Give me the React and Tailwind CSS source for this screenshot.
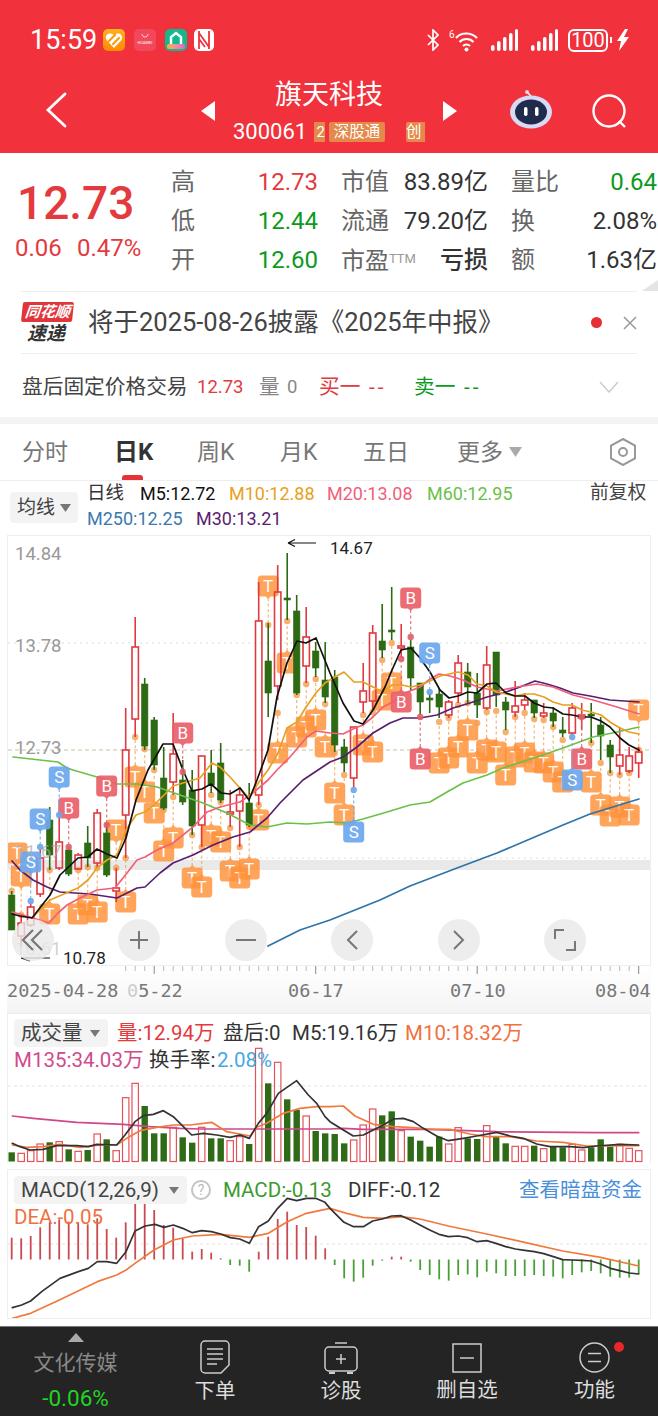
import React from "react";

const X = (i) => 11.7 + 9.5 * i;

// type, bodyTop, bodyBottom, wickTop, wickBottom (page y)
const candles = [
  ["g", 895, 930, 891, 930], ["r", 923, 936, 915, 947], ["r", 907, 925, 903, 927], ["r", 858, 894, 850, 897],
  ["g", 820, 855, 807, 870], ["r", 842, 868, 813, 870], ["g", 850, 874, 847, 876], ["r", 855, 869, 853, 870],
  ["g", 843, 858, 826, 867], ["r", 813, 863, 809, 868], ["g", 833, 875, 823, 877], ["r", 888, 891, 868, 902],
  ["r", 750, 815, 708, 858], ["r", 647, 719, 617, 737], ["g", 684, 746, 678, 750], ["g", 720, 765, 717, 770],
  ["g", 778, 808, 747, 810], ["r", 754, 782, 713, 795], ["g", 780, 802, 760, 805], ["g", 790, 826, 770, 835],
  ["r", 756, 825, 756, 847], ["g", 773, 785, 750, 793], ["g", 763, 800, 743, 803], ["r", 812, 814, 790, 827],
  ["r", 795, 811, 787, 847], ["g", 803, 825, 783, 827], ["r", 621, 795, 582, 805], ["g", 661, 693, 623, 717],
  ["r", 592, 686, 565, 700], ["g", 598, 600, 553, 620], ["g", 611, 693, 595, 695], ["r", 637, 666, 607, 683],
  ["g", 651, 668, 642, 677], ["g", 680, 697, 642, 703], ["g", 677, 745, 670, 752], ["g", 747, 763, 739, 772],
  ["r", 727, 778, 727, 787], ["r", 691, 702, 663, 713], ["r", 633, 701, 625, 710], ["g", 641, 650, 604, 658],
  ["g", 630, 632, 587, 640], ["r", 646, 648, 624, 658], ["g", 647, 678, 640, 690], ["g", 683, 702, 683, 715],
  ["g", 698, 700, 693, 713], ["g", 694, 707, 688, 718], ["r", 702, 715, 700, 718], ["r", 663, 693, 655, 703],
  ["g", 672, 687, 663, 703], ["g", 693, 705, 673, 718], ["r", 665, 708, 646, 710], ["g", 652, 695, 652, 707],
  ["g", 702, 710, 697, 730], ["r", 706, 712, 681, 717], ["r", 700, 705, 693, 710], ["g", 700, 713, 700, 718],
  ["r", 713, 716, 703, 718], ["g", 713, 721, 707, 727], ["g", 730, 733, 717, 737], ["r", 708, 733, 703, 735],
  ["r", 715, 718, 703, 730], ["g", 714, 716, 703, 743], ["g", 725, 736, 717, 760], ["g", 745, 757, 740, 773],
  ["r", 755, 766, 727, 775], ["r", 756, 771, 747, 773], ["r", 752, 763, 747, 778],
];

// i, badge centre y, dot y, optional badge x
const tMarks = [
  [0, 853, 891, 17], [1, 876, 915], [4, 914, 870], [7, 914, 870], [8, 905, 867], [9, 912, 868], [12, 902, 858], [11, 830, 868],
  [13, 777, 737], [14, 792, 749], [15, 813, 770], [16, 851, 810], [17, 838, 797], [19, 878, 835], [20, 887, 847], [21, 836, 795],
  [22, 842, 802], [23, 871, 828], [24, 878, 847], [25, 869, 827], [26, 820, 805], [27, 586, 625], [28, 753, 713], [29, 663, 621],
  [30, 737, 695], [31, 727, 684], [32, 720, 679], [33, 747, 704], [34, 793, 753], [35, 815, 775], [37, 745, 715], [38, 752, 712],
  [39, 700, 660], [40, 683, 643], [45, 763, 722], [46, 758, 718], [47, 747, 705], [48, 730, 703], [49, 763, 723], [50, 750, 712],
  [51, 752, 711], [52, 775, 732], [53, 757, 717], [54, 753, 713], [55, 762, 719], [56, 763, 720], [57, 772, 727], [58, 782, 740],
  [61, 782, 743], [62, 805, 763], [63, 816, 773], [64, 807, 775], [65, 815, 773], [66, 710, 750],
];
const bMarks = [[10, 786, 825], [6, 808, 847], [18, 733, 772], [42, 598, 637], [41, 702, 659], [43, 759, 717], [60, 759, 717]];
const sMarks = [[5, 777, 815], [3, 819, 847], [2, 862, 901], [44, 653, 692], [36, 832, 790], [59, 780, 737]];

const m5 = [[12,914],[20,916],[32,918],[50,895],[60,875],[78,858],[88,857],[97,849],[107,854],[117,858],[126,838],[136,800],[148,770],[163,744],[173,744],[183,770],[192,791],[202,789],[211,784],[221,793],[230,794],[240,788],[249,800],[257,780],[268,750],[277,697],[287,663],[297,641],[306,643],[316,638],[330,673],[343,703],[354,721],[363,724],[373,710],[385,687],[392,670],[401,650],[411,648],[420,658],[430,672],[440,690],[449,698],[458,696],[468,692],[477,693],[487,684],[496,683],[506,693],[515,696],[525,696],[534,703],[544,707],[553,708],[563,714],[572,715],[582,717],[591,717],[601,721],[610,727],[620,738],[629,745],[639,750]];
const m10 = [[32,918],[50,900],[78,888],[88,880],[97,868],[107,860],[117,855],[126,830],[136,815],[145,812],[154,805],[164,795],[173,786],[183,783],[200,778],[212,763],[220,767],[230,777],[249,798],[259,782],[268,770],[278,753],[287,728],[297,722],[306,707],[316,693],[325,683],[335,677],[344,672],[354,682],[363,682],[373,687],[383,692],[392,685],[402,685],[411,687],[420,685],[430,681],[440,676],[449,674],[458,672],[468,675],[477,684],[487,686],[496,692],[506,694],[515,696],[525,694],[534,694],[544,697],[553,702],[563,705],[572,705],[582,710],[591,712],[601,715],[610,722],[620,728],[629,732],[639,734]];
const m20 = [[12,912],[30,917],[49,923],[58,913],[67,905],[80,898],[97,890],[115,888],[127,873],[137,860],[145,857],[157,850],[173,843],[193,827],[207,812],[220,807],[240,802],[253,793],[268,780],[277,770],[290,757],[307,737],[316,731],[330,733],[343,734],[353,729],[363,725],[373,717],[383,707],[393,702],[405,693],[420,687],[430,679],[439,674],[450,676],[463,680],[477,687],[497,691],[517,687],[537,684],[553,687],[573,695],[593,700],[617,707],[639,714]];
const m30 = [[12,861],[20,870],[33,880],[47,887],[60,892],[90,894],[117,898],[137,888],[145,887],[160,873],[173,863],[193,855],[213,845],[233,837],[250,832],[267,818],[280,803],[303,780],[330,762],[343,757],[357,747],[373,733],[390,723],[403,718],[420,718],[437,715],[453,708],[470,703],[487,697],[503,693],[520,687],[535,681],[547,684],[560,688],[573,693],[590,696],[610,700],[639,702]];
const m60 = [[13,757],[58,762],[67,768],[73,770],[97,777],[117,784],[137,784],[157,787],[180,795],[203,803],[227,813],[250,825],[267,827],[287,823],[307,824],[330,822],[347,823],[363,819],[387,812],[410,805],[430,802],[447,792],[463,783],[487,775],[503,768],[537,757],[563,748],[593,737],[617,732],[639,727]];
const m250 = [[268,946],[300,930],[330,920],[380,900],[410,886],[457,868],[497,853],[530,839],[563,825],[590,814],[639,799]];

// volume bar tops, measured on a 3x crop of the panel
const volTops = [427,430,422,402,397,395,418,424,420,372,388,422,263,220,288,370,370,352,382,398,352,385,385,392,380,402,115,220,157,268,300,318,363,370,372,400,390,345,297,316,304,362,380,392,410,380,402,353,385,387,347,378,400,409,409,407,416,410,412,403,420,412,388,410,403,415,422];
const macdEnds = [218,220,213,187,172,163,170,172,178,160,192,218,172,100,112,135,180,188,220,260,252,263,280,300,302,320,260,215,162,140,180,186,212,250,300,340,350,338,302,287,275,275,290,315,330,343,347,330,328,337,320,325,333,333,333,330,333,335,340,330,322,318,325,335,338,338,327];

// left half points and right half points of the two lower panels
const join = (base, a, b) => [...a.map(([x, y]) => [x / 3, base + y / 3]), ...b.map(([x, y]) => [330 + x / 3, base + y / 3])];
const volBlack = join(1010, [[37,400],[60,410],[90,420],[130,418],[170,407],[230,407],[265,410],[290,403],[350,405],[375,375],[405,335],[430,317],[460,313],[490,302],[520,320],[550,350],[575,375],[610,370],[650,375],[690,382],[720,375],[748,385],[775,340],[800,310],[835,250],[890,212],[925,255],[950,280],[975,320]], [[0,335],[40,360],[70,378],[100,375],[130,360],[160,345],[190,327],[220,325],[250,335],[280,355],[320,378],[355,392],[400,385],[440,378],[500,367],[540,378],[580,385],[620,402],[660,410],[720,410],[760,413],[800,408],[870,403],[926,405]]);
const volOrange = join(1010, [[37,405],[80,412],[130,410],[180,403],[240,412],[300,405],[350,405],[380,385],[420,362],[470,352],[520,345],[570,345],[635,337],[680,365],[750,378],[770,352],[800,340],[850,310],[900,295],[950,290]], [[0,290],[40,288],[75,318],[130,343],[190,350],[250,353],[300,358],[360,358],[420,372],[470,380],[540,380],[620,393],[700,397],[770,408],[926,407]]);
const volPink = join(1010, [[37,318],[100,325],[230,337],[370,343],[450,350],[540,355],[600,357]], [[0,357],[40,355],[100,358],[300,358],[500,365],[800,368],[926,368]]);
const diff = join(1165, [[37,428],[65,420],[92,408],[125,380],[180,340],[235,320],[265,310],[292,290],[320,290],[350,295],[378,260],[405,198],[435,183],[465,178],[492,187],[520,180],[548,190],[577,203],[605,197],[634,200],[662,207],[691,218],[719,222],[748,235],[776,185],[805,168],[833,130],[862,100],[890,107],[919,100],[947,100],[975,112]], [[0,130],[42,172],[71,185],[100,185],[128,168],[156,162],[185,153],[213,152],[242,165],[270,180],[299,195],[327,208],[355,215],[385,213],[413,218],[441,230],[470,227],[498,235],[527,245],[556,252],[584,256],[613,260],[641,266],[670,275],[698,284],[726,285],[755,286],[784,288],[812,297],[841,310],[869,317],[898,324],[926,327]]);
const dea = join(1165, [[37,460],[92,445],[178,405],[292,350],[350,330],[378,315],[405,295],[462,255],[520,225],[577,213],[662,208],[748,217],[805,205],[862,170],[919,145]], [[0,130],[50,145],[100,157],[160,160],[213,155],[270,162],[355,183],[470,207],[584,232],[698,258],[812,277],[926,303]]);

const Line = ({ pts, color, w = 1.7 }) => (
  <polyline points={pts.map((p) => p.join(",")).join(" ")} fill="none" stroke={color} strokeWidth={w} strokeLinejoin="round" strokeLinecap="round" />
);

const Candle = ({ c, i }) => {
  const x = X(i);
  const col = c[0] === "r" ? "#e0393f" : "#2d6a14";
  return (
    <g stroke={col} strokeWidth="1.6">
      <line x1={x} x2={x} y1={c[3]} y2={c[1]} />
      <line x1={x} x2={x} y1={c[2]} y2={c[4]} />
      {c[0] === "r" ? (
        <rect x={x - 3.2} y={c[1]} width="6.4" height={c[2] - c[1]} fill="none" />
      ) : (
        <rect x={x - 3.2} y={c[1]} width="6.4" height={c[2] - c[1]} fill={col} strokeWidth="0.6" />
      )}
    </g>
  );
};

const Badge = ({ m, label, fill, dot, opacity }) => {
  const [i, y, dy, bx] = m;
  const x = X(i);
  const cx = bx ?? Math.min(x, 639);
  const dir = dy > y ? 1 : -1;
  return (
    <g opacity={opacity}>
      <line x1={x} x2={x} y1={y + dir * 12} y2={dy} stroke={dot} strokeWidth="1.1" strokeDasharray="3 2.5" />
      <circle cx={x} cy={dy} r="3.2" fill={dot} />
      <rect x={cx - 10.5} y={y - 10.5} width="21" height="21" rx="3.5" fill={fill} />
      <polygon points={`${cx - 3},${y + dir * 10} ${cx + 3},${y + dir * 10} ${cx},${y + dir * 13}`} fill={fill} />
      <text x={cx} y={y + 6} textAnchor="middle" fontSize="17" fill="#fff">{label}</text>
    </g>
  );
};

const StatusIcons = () => (
  <div className="flex items-center">
    <svg width="12" height="22" viewBox="0 0 12 22" fill="none" stroke="#fff" strokeWidth="1.7" className="mr-[10px]">
      <path d="M1 6l10 10-5 5V1l5 5L1 16" />
    </svg>
    <svg width="31" height="23" viewBox="0 0 31 23" fill="none" stroke="#fff" strokeWidth="2.2" className="mr-[11px]">
      <text x="0" y="9" fontSize="10" fill="#fff" stroke="none">6</text>
      <path d="M7 9c5-6 15-6 21 0M10.5 13c3.5-4 10.500-4 14 0M14 17c2-2 5-2 7 0" />
      <circle cx="17.500" cy="20.500" r="2" fill="#fff" stroke="none" />
    </svg>
    {[0, 1].map((k) => (
      <svg key={k} width="27" height="22" viewBox="0 0 27 22" fill="#fff" className={k === 0 ? "mr-[13px]" : "mr-[10px]"}>
        <rect x="0" y="16" width="3.500" height="6" rx="1.700" />
        <rect x="6" y="12" width="3.500" height="10" rx="1.700" />
        <rect x="12" y="8" width="3.500" height="14" rx="1.700" />
        <rect x="18" y="4" width="3.500" height="18" rx="1.700" />
        <rect x="24" y="0" width="3" height="22" rx="1.500" />
      </svg>
    ))}
    <div className="flex h-[23px] w-[40px] items-center justify-center rounded-[6px] border-2 border-white text-[20px] leading-none text-white">100</div>
    <div className="ml-[2px] mr-[5px] h-[6px] w-[2px] bg-white" />
    <svg width="12" height="22" viewBox="0 0 12 22" fill="#fff">
      <path d="M8 0L0 12h4l-2 10 10-14H7l4-8z" />
    </svg>
  </div>
);

const Header = () => (
  <header className="h-[153px] bg-[#f1323d] text-white">
    <div className="flex h-[80px] items-center pl-[30px] pr-[29px]">
      <span className="w-[73px] text-[27px] leading-none">15:59</span>
      <div className="flex h-[22px] w-[22px] items-center justify-center rounded-[5px] bg-linear-to-b from-[#ffb21d] to-[#ff8a00]">
        <svg width="18" height="17" viewBox="0 0 18 17" fill="none">
          <path d="M9 16L2 8.500C0 6 1 2 4.500 1.500 6.500 1.200 8 2 9 3.500 10 2 11.500 1.200 13.500 1.500 17 2 18 6 16 8.500z" fill="#fff" />
          <path d="M4 9l6-6M8 12l6-6" stroke="#ff9a10" strokeWidth="2.200" strokeLinecap="round" />
        </svg>
      </div>
      <div className="ml-[9px] flex h-[22px] w-[22px] flex-col items-center justify-center rounded-[5px] bg-[#f2485a]">
        <svg width="8" height="4" viewBox="0 0 8 4" fill="none" stroke="#fff" strokeWidth="0.800" className="mb-[2px]">
          <path d="M1 0c0 4 6 4 6 0" />
        </svg>
        <span className="text-[4px] leading-[6px] text-white">HUAWEI</span>
      </div>
      <div className="relative ml-[9px] flex h-[22px] w-[22px] items-start justify-center overflow-hidden rounded-[5px] bg-[#12b98c] pt-[2px]">
        <svg width="14" height="15" viewBox="0 0 14 15" fill="none" stroke="#fff" strokeWidth="2.500">
          <path d="M2 15V6l5-4 5 4v9" />
        </svg>
        <div className="absolute bottom-[2px] left-[2px] h-[5px] w-[18px] rounded-[2px] bg-linear-to-r from-[#f7b23b] to-[#e860c8]" />
      </div>
      <div className="ml-[7px] flex h-[22px] w-[20px] items-center justify-center rounded-[5px] bg-white">
        <svg width="14" height="18" viewBox="0 0 14 18" fill="none" stroke="#f1323d" strokeWidth="1.800">
          <path d="M2 0v18M12 0v18M2 2l10 14M2 8l6 8" />
        </svg>
      </div>
      <div className="ml-auto">
        <StatusIcons />
      </div>
    </div>
    <div className="flex h-[73px]">
      <svg width="22" height="36" viewBox="0 0 22 36" fill="none" stroke="#fff" strokeWidth="2.800" strokeLinecap="round" className="ml-[45px] mt-[12px]">
        <path d="M20 2L3 18l17 16" />
      </svg>
      <svg width="14" height="20" viewBox="0 0 14 20" fill="#fff" className="ml-[134px] mt-[21px]">
        <polygon points="14,0 14,20 0,10" />
      </svg>
      <div className="w-[228px] pt-[1px]">
        <div className="text-center text-[27px] leading-[29px]">旗天科技</div>
        <div className="mt-[12px] flex h-[20px] items-center pl-[18px]">
          <span className="w-[81px] text-[22px] leading-none">300061</span>
          <span className="flex h-[20px] w-[11px] justify-end overflow-hidden bg-[#e5894a] text-[15px] leading-[20px]">2</span>
          <span className="ml-[4px] h-[20px] w-[56px] rounded-[2px] bg-[#e5894a] text-center text-[15.500px] leading-[20px]">深股通</span>
          <span className="ml-[21px] h-[20px] w-[19px] overflow-hidden rounded-l-[2px] bg-[#e5894a] text-[15.500px] leading-[20px]">创</span>
        </div>
      </div>
      <svg width="14" height="20" viewBox="0 0 14 20" fill="#fff" className="mt-[21px]">
        <polygon points="0,0 0,20 14,10" />
      </svg>
      <svg width="44" height="40" viewBox="0 0 44 40" className="ml-[52px] mt-[9px]">
        <circle cx="18" cy="3" r="2" fill="#f9c4cf" />
        <path d="M18 3l4 4" stroke="#fff" strokeWidth="1.500" />
        <ellipse cx="22" cy="23" rx="21" ry="16.500" fill="#d8d9f5" />
        <ellipse cx="22" cy="23" rx="16" ry="12.500" fill="#1f2a4d" />
        <rect x="15" y="18" width="3.500" height="9" rx="1.700" fill="#fff" />
        <rect x="26" y="18" width="3.500" height="9" rx="1.700" fill="#fff" />
      </svg>
      <svg width="36" height="36" viewBox="0 0 36 36" fill="none" stroke="#fff" strokeWidth="2.400" className="ml-[39px] mt-[14px]">
        <circle cx="17" cy="17" r="15.500" />
        <path d="M27 27l6 6" />
      </svg>
    </div>
  </header>
);

const Cell = ({ label, value, valueClass = "text-[#333]" }) => (
  <div className="flex items-center justify-between">
    <span className="text-[#666]">{label}</span>
    <span className={valueClass}>{value}</span>
  </div>
);

const Stats = () => (
  <section className="relative flex h-[138px] pt-[10px] text-[24px] leading-[38.500px]">
    <div className="w-[171px] pl-[17px] text-[#e33a3e]">
      <div className="mt-[9px] text-[46px] font-medium leading-[62px]">12.73</div>
      <div className="-ml-[2px] mt-[-1px] flex text-[24px] leading-[30px]">
        <span className="w-[62px]">0.06</span>
        <span>0.47%</span>
      </div>
    </div>
    <div className="grid h-[116px] grid-cols-[147px_147px_147px] gap-x-[23px]">
      <Cell label="高" value="12.73" valueClass="text-[#e33a3e]" />
      <Cell label="市值" value="83.89亿" />
      <Cell label="量比" value="0.64" valueClass="text-[#0b9a1e] pr-[1px]" />
      <Cell label="低" value="12.44" valueClass="text-[#0b9a1e]" />
      <Cell label="流通" value="79.20亿" />
      <Cell label="换" value="2.08%" valueClass="text-[#333] pr-[1px]" />
      <Cell label="开" value="12.60" valueClass="text-[#0b9a1e]" />
      <Cell
        label={
          <>
            市盈<span className="text-[13px] align-[6px] text-[#999]">TTM</span>
          </>
        }
        value="亏损"
        valueClass="text-[#333] font-medium"
      />
      <Cell label="额" value="1.63亿" valueClass="text-[#333] pr-[1px]" />
    </div>
    <svg width="16" height="11" viewBox="0 0 16 11" className="absolute bottom-[0px] right-0" fill="#e4e4e4">
      <polygon points="16,0 16,11 0,11" />
    </svg>
  </section>
);

const Notice = () => (
  <section className="mx-[21px] flex h-[63px] items-center border-y border-[#eee]">
    <div className="ml-[1px] mt-[1px] flex w-[66px] flex-col">
      <span className="flex h-[20px] w-[51px] -skew-x-6 items-center justify-center rounded-[2px] bg-[#e0353b] text-[15px] font-bold italic leading-none text-white">同花顺</span>
      <span className="mt-[2px] pl-[5px] text-[19px] font-bold italic leading-[20px] text-[#333]">速递</span>
    </div>
    <span className="w-[503px] text-[25.500px] leading-none text-[#444]">将于2025-08-26披露《2025年中报》</span>
    <span className="h-[11px] w-[11px] rounded-full bg-[#e52e35]" />
    <svg width="14" height="14" viewBox="0 0 14 14" stroke="#999" strokeWidth="1.500" className="ml-[21px]">
      <path d="M1 1l12 12M13 1L1 13" />
    </svg>
  </section>
);

const FixedPrice = () => (
  <section className="flex h-[63px] items-center pl-[22px] pt-[3px] text-[20.700px] leading-none">
    <span className="w-[175px] text-[#444]">盘后固定价格交易</span>
    <span className="w-[62px] text-[18.500px] text-[#e33a3e]">12.73</span>
    <span className="w-[28px] text-[#888]">量</span>
    <span className="w-[32px] text-[18.500px] text-[#888]">0</span>
    <span className="w-[50px] text-[#e33a3e]">买一</span>
    <span className="w-[45px] tracking-[3px] text-[#e33a3e]">--</span>
    <span className="w-[50px] text-[#0b9a1e]">卖一</span>
    <span className="w-[135px] tracking-[3px] text-[#0b9a1e]">--</span>
    <svg width="20" height="12" viewBox="0 0 20 12" fill="none" stroke="#ccc" strokeWidth="1.500">
      <path d="M1 1l9 10 9-10" />
    </svg>
  </section>
);

const Tabs = () => (
  <nav className="flex h-[57px] items-center border-b border-[#eee] pl-[22px] text-[23px] leading-none text-[#777]">
    <span className="w-[92px]">分时</span>
    <span className="relative flex h-full w-[83px] items-center text-[24px] font-bold text-[#333]">
      日K
      <span className="absolute bottom-0 left-[8px] h-[5px] w-[21px] rounded-t-[3px] bg-[#e5333a]" />
    </span>
    <span className="w-[83px]">周K</span>
    <span className="w-[83px]">月K</span>
    <span className="w-[94px]">五日</span>
    <span className="w-[52px]">更多</span>
    <svg width="13" height="10" viewBox="0 0 13 10" fill="#aaa">
      <polygon points="0,0 13,0 6.500,10" />
    </svg>
    <svg width="30" height="28" viewBox="0 0 30 28" fill="none" stroke="#999" strokeWidth="2" className="ml-[86px]">
      <polygon points="15,1 27,7.500 27,20.500 15,27 3,20.500 3,7.500" />
      <circle cx="15" cy="14" r="4" />
    </svg>
  </nav>
);

const MaLegend = () => (
  <section className="flex h-[54px] pl-[10px] text-[18px] leading-[25px]">
    <div className="mt-[11px] flex h-[31px] w-[68px] items-center rounded-[4px] bg-[#f3f3f3] pl-[7px] text-[19px] text-[#444]">
      <span className="w-[43px]">均线</span>
      <svg width="11" height="8" viewBox="0 0 11 8" fill="#777">
        <polygon points="0,0 11,0 5.500,8" />
      </svg>
    </div>
    <div className="ml-[9px] flex-1">
      <div className="flex">
        <span className="w-[53px] text-[18.500px] text-[#333]">日线</span>
        <span className="w-[89px] text-[#111]">M5:12.72</span>
        <span className="w-[98px] text-[#e8a020]">M10:12.88</span>
        <span className="w-[100px] text-[#f0607a]">M20:13.08</span>
        <span className="w-[163px] text-[#6cc04a]">M60:12.95</span>
        <span className="text-[18.800px] text-[#444]">前复权</span>
      </div>
      <div className="flex">
        <span className="w-[109px] text-[#3a7ab0]">M250:12.25</span>
        <span className="text-[#5a1e6e]">M30:13.21</span>
      </div>
    </div>
  </section>
);

const RoundBtn = ({ children }) => (
  <div className="flex h-[42px] w-[42px] items-center justify-center rounded-full bg-[#e8e8e8]/80">{children}</div>
);

const btnIcon = { fill: "none", stroke: "#777", strokeWidth: 2 };

const PriceChart = () => (
  <div className="relative mx-[7px] h-[431px] border border-[#eee]">
    <svg width="642" height="429" viewBox="8 536 642 429" className="block">
      <line x1="8" x2="650" y1="643" y2="643" stroke="#ddd" strokeDasharray="2 4" />
      <line x1="8" x2="650" y1="750" y2="750" stroke="#cbbfa8" strokeDasharray="4 3" />
      <line x1="8" x2="650" y1="858" y2="858" stroke="#ddd" strokeDasharray="2 4" />
      <rect x="8" y="860" width="642" height="10" fill="#e9e9e9" />
      {tMarks.map((m) => (
        <Badge key={m[0]} m={m} label="T" fill="#ff9238" dot="#f5a050" opacity="0.82" />
      ))}
      {candles.map((c, i) => (
        <Candle key={i} c={c} i={i} />
      ))}
      <Line pts={m250} color="#2f74a8" />
      <Line pts={m60} color="#6cc04a" />
      <Line pts={m30} color="#5a1e6e" />
      <Line pts={m20} color="#f0607a" />
      <Line pts={m10} color="#e8a020" />
      <Line pts={m5} color="#111" />
      {bMarks.map((m) => (
        <Badge key={m[0]} m={m} label="B" fill="#ea6069" dot="#e0606a" opacity="0.92" />
      ))}
      {sMarks.map((m) => (
        <Badge key={m[0]} m={m} label="S" fill="#6ca8ee" dot="#6ca8e8" opacity="0.92" />
      ))}
      <path d="M288 543h28M288 543l7-3.500M288 543l7 3.500" stroke="#111" strokeWidth="1.200" fill="none" />
      <path d="M21 958h29M21 958l9 3" stroke="#111" strokeWidth="1.200" fill="none" />
    </svg>
    <span className="absolute left-[7px] top-[7px] text-[18.500px] leading-[23px] text-[#999]">14.84</span>
    <span className="absolute left-[7px] top-[99px] text-[18.500px] leading-[23px] text-[#999]">13.78</span>
    <span className="absolute left-[7px] top-[201px] text-[18.500px] leading-[23px] text-[#999]">12.73</span>
    <span className="absolute left-[7px] top-[305px] text-[18.500px] leading-[23px] text-[#aaa]/70">11.67</span>
    <span className="absolute left-[7px] top-[402px] text-[18.500px] leading-[23px] text-[#bbb]/70">10.61</span>
    <span className="absolute left-[322px] top-[2px] text-[17px] leading-[20px] text-[#222]">14.67</span>
    <span className="absolute left-[55px] top-[412px] text-[17px] leading-[20px] text-[#222]">10.78</span>
    <div className="absolute left-[4px] top-[383px] flex gap-[64.400px]">
      <RoundBtn>
        <svg width="24" height="24" viewBox="0 0 24 24" {...btnIcon} strokeWidth="2.200">
          <path d="M12 2L2 12l10 10M21 2L11 12l10 10" />
        </svg>
      </RoundBtn>
      <RoundBtn>
        <svg width="20" height="20" viewBox="0 0 20 20" {...btnIcon}>
          <path d="M10 1v18M1 10h18" />
        </svg>
      </RoundBtn>
      <RoundBtn>
        <svg width="20" height="4" viewBox="0 0 20 4" {...btnIcon}>
          <path d="M0 2h20" />
        </svg>
      </RoundBtn>
      <RoundBtn>
        <svg width="12" height="20" viewBox="0 0 12 20" {...btnIcon}>
          <path d="M11 1L2 10l9 9" />
        </svg>
      </RoundBtn>
      <RoundBtn>
        <svg width="12" height="20" viewBox="0 0 12 20" {...btnIcon}>
          <path d="M1 1l9 9-9 9" />
        </svg>
      </RoundBtn>
      <RoundBtn>
        <svg width="22" height="22" viewBox="0 0 22 22" {...btnIcon}>
          <path d="M10 1H1v9M12 21h9v-9" />
        </svg>
      </RoundBtn>
    </div>
  </div>
);

const DateAxis = () => (
  <section className="mx-[7px] h-[47px] bg-linear-to-b from-white to-[#f4f4f4]">
    <svg width="644" height="9" viewBox="7 966 644 9" className="block">
      {candles.map((_, i) =>
        i >= 12 ? <line key={i} x1={X(i)} x2={X(i)} y1="966" y2={(i - 15) % 17 === 0 ? 974 : 971} stroke={(i - 15) % 17 === 0 ? "#888" : "#bbb"} strokeWidth="1" /> : null
      )}
    </svg>
    <div className="mt-[5px] flex font-['DejaVu_Sans_Mono',monospace] text-[18.500px] leading-[22px] text-[#777]">
      <span className="w-[120px]">2025-04-28</span>
      <span className="w-[161px]"><span className="text-[#ccc]">0</span>5-22</span>
      <span className="w-[162px]">06-17</span>
      <span className="w-[145px]">07-10</span>
      <span>08-04</span>
    </div>
  </section>
);

const Dropdown = ({ w, label }) => (
  <div className={`flex h-[28px] items-center justify-between rounded-[4px] bg-[#f3f3f3] pl-[7px] pr-[8px] ${w}`}>
    <span className="text-[#444]">{label}</span>
    <svg width="10" height="7" viewBox="0 0 10 7" fill="#777">
      <polygon points="0,0 10,0 5,7" />
    </svg>
  </div>
);

const VolumePanel = () => (
  <div className="relative mx-[7px] h-[150px] border-x border-t border-[#eee]">
    <svg width="642" height="149" viewBox="8 1014 642 149" className="block">
      <line x1="8" x2="650" y1="1086" y2="1086" stroke="#e4e4e4" strokeDasharray="3 3" />
      {volTops.map((t, i) => {
        const red = candles[i][0] === "r";
        const y = 1010 + t / 3;
        return (
          <rect key={i} x={X(i) - 3.2} y={y} width="6.400" height={1161.500 - y} fill={red ? "none" : "#2f6a16"} stroke={red ? "#e2545a" : "none"} strokeWidth="1.200" />
        );
      })}
      <Line pts={volPink} color="#d0488a" />
      <Line pts={volOrange} color="#f07a3e" />
      <Line pts={volBlack} color="#333" />
    </svg>
    <div className="absolute left-[6px] top-[5px] text-[20.500px] leading-[26px]">
      <div className="flex items-center">
        <Dropdown w="w-[94px]" label="成交量" />
        <span className="ml-[9px] w-[106px] text-[#e33a3e]">量:12.94万</span>
        <span className="w-[69px] text-[#333]">盘后:0</span>
        <span className="w-[113px] text-[#333]">M5:19.16万</span>
        <span className="text-[#f07040]">M10:18.32万</span>
      </div>
      <div className="flex">
        <span className="w-[135px] text-[#d04a8a]">M135:34.03万</span>
        <span className="w-[68px] text-[#333]">换手率:</span>
        <span className="text-[#4aa8e0]">2.08%</span>
      </div>
    </div>
  </div>
);

const MacdPanel = () => (
  <div className="relative mx-[7px] mt-[6px] h-[150px] border border-[#eee]">
    <svg width="642" height="148" viewBox="8 1170 642 148" className="block">
      <line x1="8" x2="650" y1="1244" y2="1244" stroke="#e4e4e4" strokeDasharray="3 3" />
      {macdEnds.map((t, i) => {
        const y = 1165 + t / 3;
        const red = y < 1259;
        return <line key={i} x1={X(i)} x2={X(i)} y1={1259.500} y2={y} stroke={red ? "#c94a50" : "#4a9e3a"} strokeWidth="1.800" />;
      })}
      <Line pts={dea} color="#f07a3e" />
      <Line pts={diff} color="#333" />
    </svg>
    <div className="absolute left-[6px] top-[6px] text-[20.500px] leading-[26px]">
      <div className="flex items-center">
        <Dropdown w="w-[173px]" label="MACD(12,26,9)" />
        <span className="ml-[4px] flex h-[20px] w-[20px] items-center justify-center rounded-full border-2 border-[#c4c4c4] text-[14px] text-[#bbb]">?</span>
        <span className="ml-[12px] w-[125px] text-[#3a9a2e]">MACD:-0.13</span>
        <span className="w-[171px] text-[#333]">DIFF:-0.12</span>
        <span className="text-[#4a90d9]">查看暗盘资金</span>
      </div>
      <div className="text-[#f07040]">DEA:-0.05</div>
    </div>
  </div>
);

const FootIcon = ({ w, label, icon, iconBox }) => (
  <div className={`flex flex-col items-center ${w}`}>
    <div className={`flex items-end ${iconBox}`}>{icon}</div>
    <span className="mt-[4px] text-[20.500px] leading-[26px] text-[#ddd]">{label}</span>
  </div>
);

const BottomBar = () => (
  <footer className="mt-[7px] flex h-[90px] border-t border-[#777] bg-[#242424]">
    <div className="flex w-[151px] flex-col items-center pt-[6px]">
      <svg width="16" height="9" viewBox="0 0 16 9" fill="#aaa">
        <polygon points="8,0 16,9 0,9" />
      </svg>
      <span className="mt-[7px] text-[21px] leading-[28px] text-[#888]">文化传媒</span>
      <span className="mt-[7px] text-[22.500px] leading-[28px] text-[#22d422]">-0.06%</span>
    </div>
    <FootIcon
      w="w-[128px]"
      iconBox="h-[47px]"
      label="下单"
      icon={
        <svg width="30" height="34" viewBox="0 0 30 34" fill="none" stroke="#ccc" strokeWidth="1.500">
          <path d="M5 1h20a4 4 0 0 1 4 4v20l-8 8H5a4 4 0 0 1-4-4V5a4 4 0 0 1 4-4z" />
          <path d="M7 9h16M7 14h16M7 19h16M7 24h10" />
        </svg>
      }
    />
    <FootIcon
      w="w-[124px]"
      iconBox="h-[47px]"
      label="诊股"
      icon={
        <svg width="34" height="32" viewBox="0 0 34 32" fill="none" stroke="#ccc" strokeWidth="1.500">
          <path d="M11 1h12" />
          <rect x="1" y="5" width="32" height="24" rx="4" />
          <path d="M17 12v10M12 17h10" />
          <path d="M5 31h6M23 31h6" strokeWidth="2.500" />
        </svg>
      }
    />
    <FootIcon
      w="w-[128px]"
      iconBox="h-[46px]"
      label="删自选"
      icon={
        <svg width="30" height="30" viewBox="0 0 30 30" fill="none" stroke="#ccc" strokeWidth="1.500">
          <rect x="1" y="1" width="28" height="28" />
          <path d="M8 15h14" />
        </svg>
      }
    />
    <div className="relative">
      <FootIcon
        w="w-[127px]"
        iconBox="h-[46px]"
        label="功能"
        icon={
          <svg width="31" height="31" viewBox="0 0 31 31" fill="none" stroke="#ccc" strokeWidth="1.500">
            <circle cx="15.500" cy="15.500" r="14.500" />
            <path d="M9 11.500h13M9 19.500h13" />
          </svg>
        }
      />
      <span className="absolute left-[83px] top-[15px] h-[10px] w-[10px] rounded-full bg-[#e8262c]" />
    </div>
  </footer>
);

export default function App() {
  return (
    <div className="h-[1416px] w-[658px] overflow-hidden bg-white font-['Roboto','Noto_Sans_CJK_SC',sans-serif]">
      <Header />
      <Stats />
      <Notice />
      <FixedPrice />
      <div className="h-[7px] bg-[#f3f3f3]" />
      <Tabs />
      <MaLegend />
      <PriceChart />
      <DateAxis />
      <VolumePanel />
      <MacdPanel />
      <BottomBar />
    </div>
  );
}
